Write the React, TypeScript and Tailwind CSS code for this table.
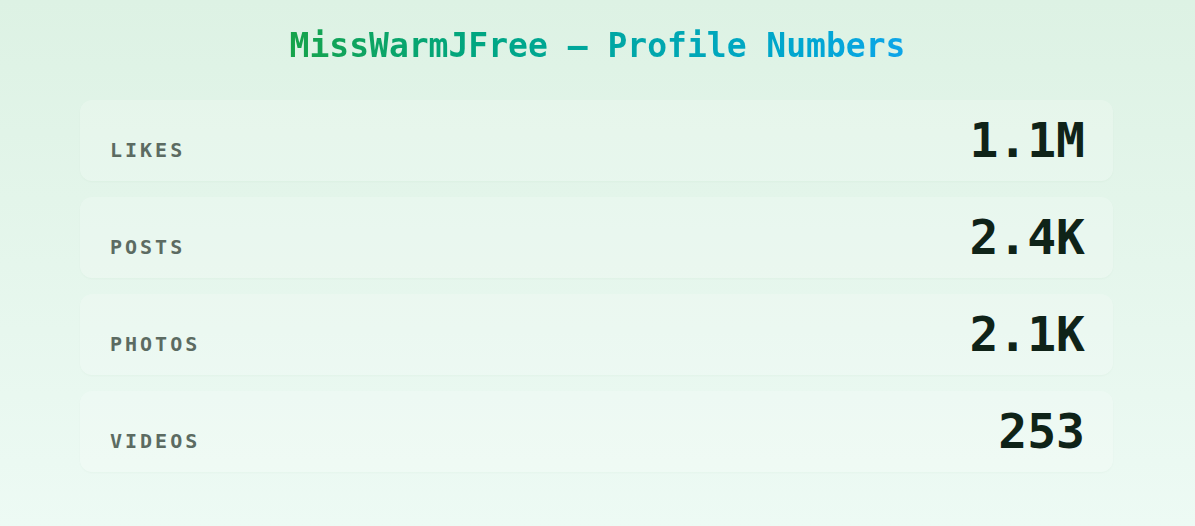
const stats = [
  { label: "Likes", value: "1.1M" },
  { label: "Posts", value: "2.4K" },
  { label: "Photos", value: "2.1K" },
  { label: "Videos", value: "253" },
];

export default function App() {
  return (
    <div
      className="min-h-screen w-full bg-gradient-to-b from-[#ddf2e4] to-[#edfaf4] pt-[29px]"
      style={{ fontFamily: '"DejaVu Sans Mono", monospace' }}
    >
      <h1 className="text-center text-[33px] font-bold leading-none">
        <span className="bg-gradient-to-r from-[#16a34a] to-[#0ea5e9] bg-clip-text text-transparent">
          MissWarmJFree — Profile Numbers
        </span>
      </h1>

      <div className="ml-20 mt-[38px] flex w-[1033px] flex-col gap-4">
        {stats.map((s) => (
          <div
            key={s.label}
            className="flex items-baseline justify-between rounded-xl bg-white/20 py-4 pl-[30px] pr-7 shadow-[0_1px_2px_rgba(16,80,40,0.03)]"
          >
            <span className="text-[20px] font-bold uppercase tracking-[0.15em] text-[#5c6b62]">
              {s.label}
            </span>
            <span className="text-[48px] font-bold leading-none text-[#0f2318]">
              {s.value}
            </span>
          </div>
        ))}
      </div>
    </div>
  );
}
